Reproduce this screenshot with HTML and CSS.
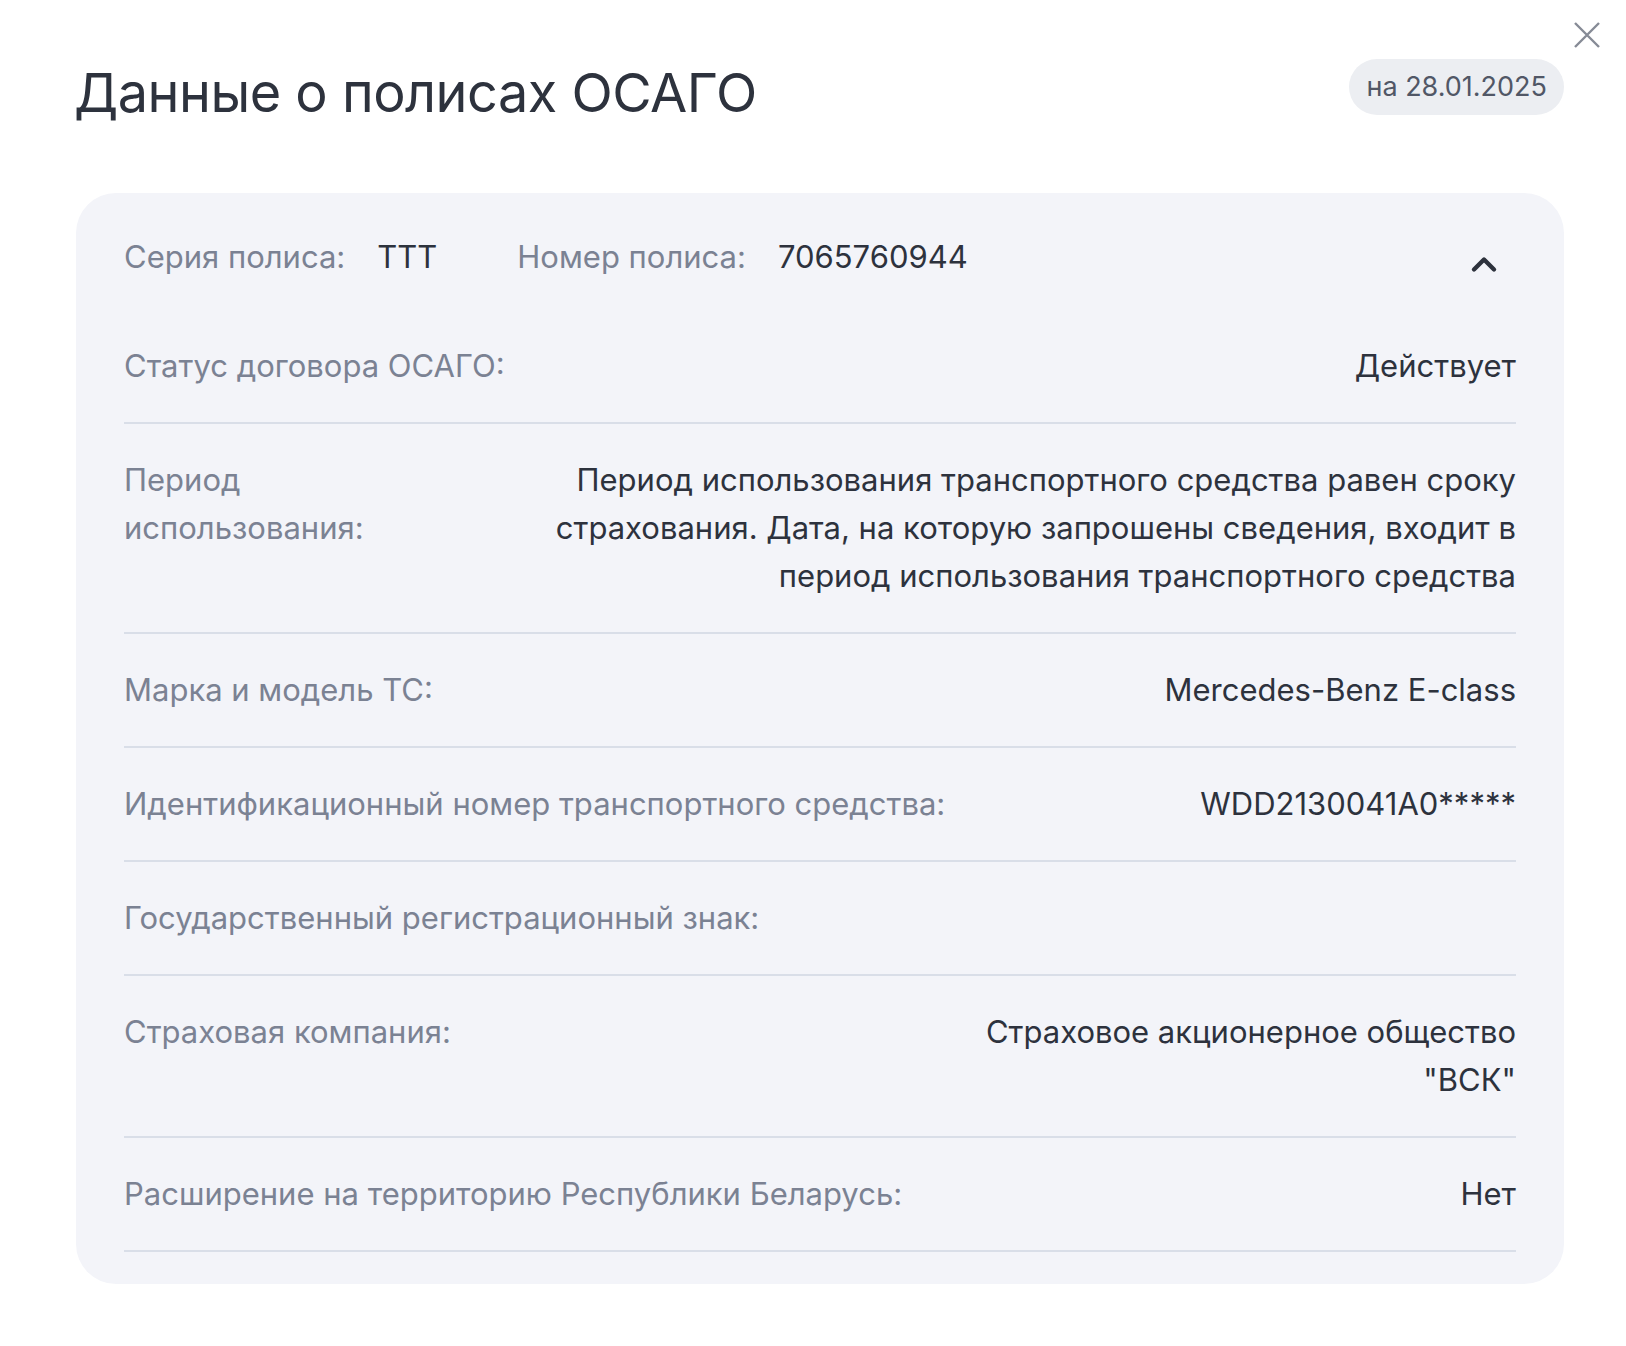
FILE: index.html
```html
<!DOCTYPE html>
<html lang="ru">
<head>
  <meta charset="UTF-8">
  <meta name="viewport" content="width=device-width, initial-scale=1.0">
  <title>Данные о полисах ОСАГО</title>
  <link rel="stylesheet" href="styles.css">
</head>
<body>
  <div class="modal">
    <button class="close-btn" type="button" aria-label="Закрыть">
      <svg width="26" height="26" viewBox="0 0 26 26">
        <path d="M1 1 L25 25 M25 1 L1 25" stroke="#868b96" stroke-width="2.4" fill="none"/>
      </svg>
    </button>

    <div class="modal-head">
      <h1>Данные о полисах ОСАГО</h1>
      <span class="date-pill">на 28.01.2025</span>
    </div>

    <div class="policy-card">
      <div class="policy-top">
        <span class="label">Серия полиса:</span>
        <span class="value">ТТТ</span>
        <span class="label second">Номер полиса:</span>
        <span class="value">7065760944</span>
        <svg class="chevron" width="28" height="28" viewBox="0 0 28 28">
          <path d="M4 19.5 L14 9.5 L24 19.5" stroke="#2d323d" stroke-width="4.4" stroke-linecap="round" stroke-linejoin="round" fill="none"/>
        </svg>
      </div>

      <div class="row">
        <div class="row-label">Статус договора ОСАГО:</div>
        <div class="row-value">Действует</div>
      </div>
      <div class="row">
        <div class="row-label">Период<br>использования:</div>
        <div class="row-value">Период использования транспортного средства равен сроку<br>страхования. Дата, на которую запрошены сведения, входит в<br>период использования транспортного средства</div>
      </div>
      <div class="row">
        <div class="row-label">Марка и модель ТС:</div>
        <div class="row-value">Mercedes-Benz E-class</div>
      </div>
      <div class="row">
        <div class="row-label">Идентификационный номер транспортного средства:</div>
        <div class="row-value">WDD2130041A0*****</div>
      </div>
      <div class="row">
        <div class="row-label">Государственный регистрационный знак:</div>
        <div class="row-value"></div>
      </div>
      <div class="row">
        <div class="row-label">Страховая компания:</div>
        <div class="row-value">Страховое акционерное общество<br>"ВСК"</div>
      </div>
      <div class="row">
        <div class="row-label">Расширение на территорию Республики Беларусь:</div>
        <div class="row-value">Нет</div>
      </div>
    </div>
  </div>
</body>
</html>
```

FILE: styles.css
```css
body {
  margin: 0;
  padding: 0;
  background: #fff;
  font-family: Inter, "Noto Sans", sans-serif;
  color: #2d323d;
}

.modal {
  position: relative;
  padding: 59px 62px 40px 76px;
}

.close-btn {
  position: absolute;
  top: 22px;
  right: 26px;
  width: 26px;
  height: 26px;
  padding: 0;
  border: none;
  background: none;
  cursor: pointer;
}

.close-btn svg {
  display: block;
}

.modal-head {
  display: flex;
  justify-content: space-between;
  align-items: flex-start;
}

.modal-head h1 {
  margin: 1px 0 0 -2px;
  font-size: 54px;
  font-weight: 400;
  line-height: 65px;
  letter-spacing: -0.5px;
  color: #2d323d;
}

.date-pill {
  display: inline-block;
  height: 56px;
  line-height: 56px;
  padding: 0 17px;
  border-radius: 28px;
  background: #eceef2;
  color: #515766;
  font-size: 27px;
}

.policy-card {
  margin-top: 68px;
  padding: 40px 48px 32px;
  background: #f3f4f9;
  border-radius: 40px;
}

.policy-top {
  display: flex;
  align-items: flex-start;
  margin-bottom: 29px;
  font-size: 31px;
  line-height: 48px;
}

.policy-top .label {
  color: #7b8293;
  margin-right: 32px;
}

.policy-top .label.second {
  margin-left: 80px;
}

.policy-top .value {
  color: #2d323d;
}

.chevron {
  margin: 17px 18px 0 auto;
}

.row {
  display: flex;
  justify-content: space-between;
  gap: 40px;
  padding: 32px 0;
  border-bottom: 2px solid #d9dee8;
  font-size: 31px;
  line-height: 48px;
}

.row-label {
  color: #7b8293;
}

.row-value {
  color: #2d323d;
  text-align: right;
}
```
